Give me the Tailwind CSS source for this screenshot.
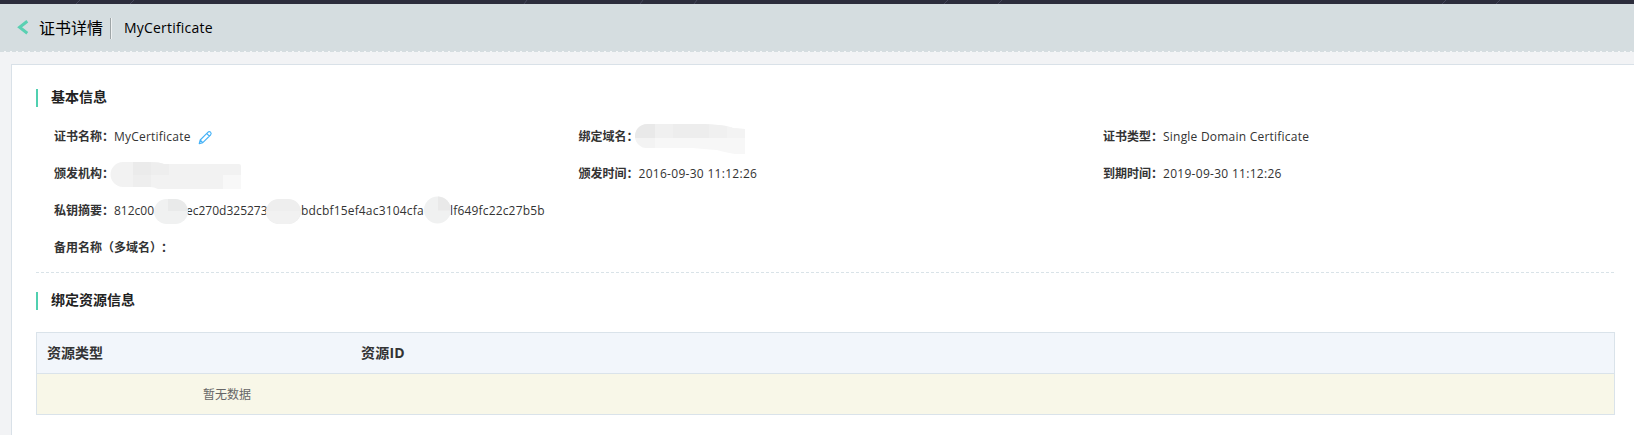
<!DOCTYPE html>
<html lang="zh-CN">
<head>
<meta charset="utf-8">
<title>证书详情</title>
<script src="https://cdn.jsdelivr.net/npm/@tailwindcss/browser@4"></script>
</head>
<body class="h-[435px] overflow-hidden bg-[#f2f3f5] font-['Open_Sans','Noto_Sans_CJK_SC',sans-serif] text-[12px] text-[#333]">
<div class="h-1 bg-[#2c2d3c]">
  <svg class="block" width="1634" height="4" stroke="#45465a" fill="none"><path d="M76 4l4-4M130 4l4-4M524 4l3-4M640 4l3-4M694 4l3-4M944 4l4-4M998 4l4-4M1442 4l4-4M1496 4l4-4"/></svg>
</div>
<header class="flex h-12 items-start bg-[#d5dde0] pl-[17px]">
  <svg class="mt-4 block" width="12" height="15" viewBox="0 0 12 15" fill="none" stroke="#5ad0b2" stroke-width="3"><path d="M10.3 1.2L2.6 7.3l7.7 6"/></svg>
  <h1 class="ml-[10px] mt-3 w-[71px] text-[16px] leading-6 text-black">证书详情</h1>
  <div class="mt-[14px] h-[21px] w-0.5 border-l border-r border-l-[#9fa5a7] border-r-[#eef1f2]"></div>
  <div class="ml-3 mt-3 text-[14px] leading-6 tracking-[0.2px] text-black">MyCertificate</div>
</header>
<svg class="-mt-px block" width="1634" height="1"><path d="M4 .5H1634" stroke="#f4f6f7" stroke-dasharray="2 4"/></svg>
<main class="ml-[11px] mt-3 h-[380px] border-l border-t border-[#d9e1e8] bg-white pl-6 pr-[19px] pt-6">
  <h2 class="h-[18px] border-l-2 border-[#50d0b0] pl-[13px] text-[14px] font-bold leading-4 text-[#222]">基本信息</h2>
  <div class="mt-[11px] grid grid-cols-[524.5px_524.5px_1fr] auto-rows-[37px] whitespace-nowrap pl-[18px] leading-[37px]">
    <div class="flex"><b class="w-[60px] shrink-0 font-bold">证书名称：</b><span class="tracking-[0.22px]">MyCertificate</span>
      <svg class="ml-[7px] mt-[12px]" width="15" height="15" viewBox="0 0 15 15" fill="none" stroke="#45b2f7" stroke-width="1.1" stroke-linejoin="round"><path d="M1.2 13.6l1-3.6 7.6-7.7c1.9-1.9 4.5.8 2.7 2.7L4.8 12.6zM8.7 3.5l2.7 2.7M2.2 10l2.6 2.6"/></svg>
    </div>
    <div class="flex"><b class="w-[56px] shrink-0 font-bold">绑定域名：</b>
      <svg class="mt-[5px]" width="111" height="31" viewBox="0 0 111 31"><defs><clipPath id="domain"><path d="M12 1H70Q92 2 98 5L110 6V31H100Q88 29 82 27Q68 26 58 25H12A12 12 0 0 1 12 1Z"/></clipPath></defs><g clip-path="url(#domain)"><path fill="#f7f7f7" d="M0 0h111v31H0z"/><path fill="#e9e9e9" d="M0 0h20v15H0z"/><path fill="#f0f0f0" d="M20 0h18v15H20zM74 0h18v15H74z"/><path fill="#ededed" d="M38 0h36v15H38z"/><path fill="#f3f3f3" d="M92 0h19v15H92zM0 15h20v16H0z"/></g></svg>
    </div>
    <div class="flex"><b class="w-[60px] shrink-0 font-bold">证书类型：</b><span class="tracking-[0.22px]">Single Domain Certificate</span></div>
    <div class="flex"><b class="w-[56px] shrink-0 font-bold">颁发机构：</b>
      <svg class="mt-[6px]" width="131" height="28" viewBox="0 0 131 28"><defs><clipPath id="issuer"><path d="M13 1H38Q50 1 54 3H129Q131 3 131 5V28H48Q44 26 40 26H13A12.5 12.5 0 0 1 13 1Z"/></clipPath></defs><g clip-path="url(#issuer)"><path fill="#f2f2f2" d="M0 0h131v28H0z"/><path fill="#ebebeb" d="M23 0h18v14H23z"/><path fill="#eee" d="M41 0h18v14H41zM23 14h18v14H23z"/><path fill="#f8f8f8" d="M113 14h18v14h-18z"/></g></svg>
    </div>
    <div class="flex"><b class="w-[60px] shrink-0 font-bold">颁发时间：</b><span class="tracking-[0.29px]">2016-09-30 11:12:26</span></div>
    <div class="flex"><b class="w-[60px] shrink-0 font-bold">到期时间：</b><span class="tracking-[0.29px]">2019-09-30 11:12:26</span></div>
    <div class="col-span-3 flex"><b class="w-[60px] shrink-0 font-bold">私钥摘要：</b><span class="w-10 overflow-hidden">812c00</span>
      <svg class="z-10 mt-[6px]" width="34" height="26" viewBox="0 0 34 26"><rect y="1" width="34" height="25" rx="12.5" fill="#f0f1f1"/><path fill="#e9eaea" d="M14 1h8q10 1 12 12H14z"/></svg>
      <span class="-ml-0.5 w-20">ec270d325273</span>
      <svg class="z-10 mt-[6px]" width="35" height="26" viewBox="0 0 35 26"><rect y="1" width="35" height="25" rx="12.5" fill="#eee"/><path fill="#f1f1f1" d="M0 13h35q-2 12-12 13H12Q1 24 0 13z"/></svg>
      <span class="w-[123px] tracking-[0.17px]">bdcbf15ef4ac3104cfa</span>
      <svg class="z-10 mt-[4px]" width="27" height="28" viewBox="0 0 27 28"><ellipse cx="13.5" cy="14" rx="13.5" ry="13.5" fill="#f0f1f1"/><path fill="#e9e9e9" d="M14 .5q12 1 13 14H14z"/></svg>
      <span class="-ml-px tracking-[0.17px]">lf649fc22c27b5b</span>
    </div>
    <div class="col-span-3"><b class="font-bold">备用名称<span>（多域名）</span><span class="ml-[5px]">：</span></b></div>
  </div>
  <svg class="mt-[6px] block w-full" height="1"><path d="M0 .5H1580" stroke="#d9e3e8" stroke-dasharray="3 2"/></svg>
  <h2 class="mt-[19px] h-[18px] border-l-2 border-[#50d0b0] pl-[13px] text-[14px] font-bold leading-4 text-[#222]">绑定资源信息</h2>
  <div class="mt-[22px] border border-[#dae3ea]">
    <div class="flex h-[41px] border-b border-[#dae3ea] bg-[#f2f6fb] pl-[10px] text-[14px] font-bold leading-10"><span class="w-[314px]">资源类型</span><span class="tracking-[0.2px]">资源ID</span></div>
    <div class="h-10 bg-[#f8f7e8] pl-[166px] leading-[41px] text-[#666]">暂无数据</div>
  </div>
</main>
</body>
</html>
